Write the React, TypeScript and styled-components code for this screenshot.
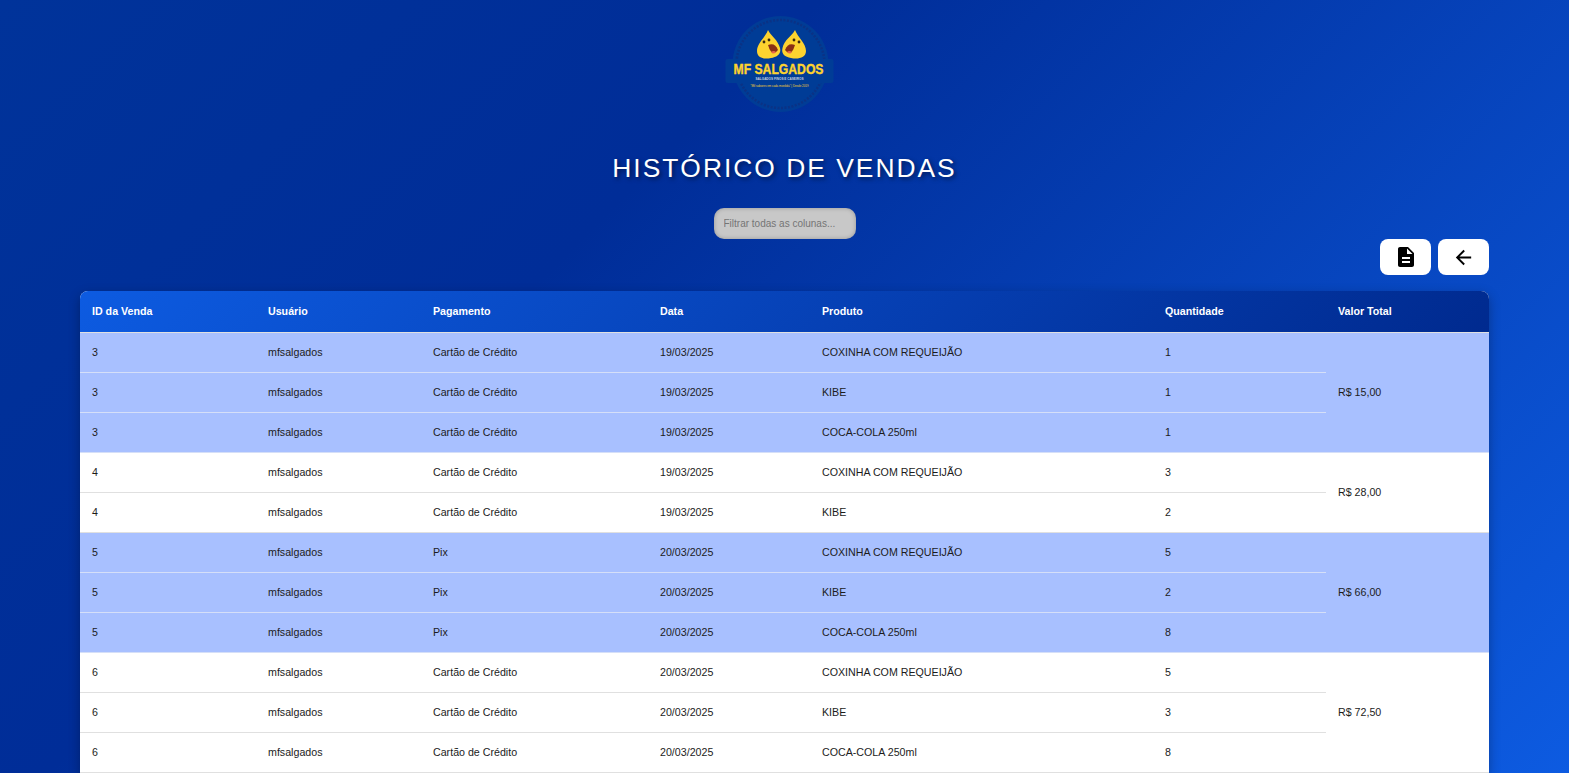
import React from "react";
import styled, { createGlobalStyle } from "styled-components";
import { MdArrowBack, MdDescription } from "react-icons/md";

const GlobalStyle = createGlobalStyle`
    html, body {
        margin: 0;
        padding: 0;
        height: 100%;
        overflow: hidden;
    }
    body {
        font-family: "Liberation Sans", Arial, sans-serif;
    }
`;

const Page = styled.main`
    box-sizing: border-box;
    height: 100vh;
    overflow: hidden;
    padding: 15px 80px 0 80px;
    background: linear-gradient(135deg, #00339a 0%, #002d98 35%, #0d5be1 100%);
    display: flex;
    flex-direction: column;
`;

const LogoWrap = styled.div`
    display: flex;
    justify-content: center;
    height: 98px;
`;

const Title = styled.h1`
    margin: 39px 0 0;
    font-size: 26.4px;
    line-height: 32px;
    font-weight: 400;
    letter-spacing: 2px;
    text-align: center;
    color: #fff;
    text-shadow: 2px 2px 4px rgba(0, 0, 0, 0.5);
`;

const FilterRow = styled.div`
    display: flex;
    justify-content: center;
    margin-top: 24px;
`;

const FilterInput = styled.input`
    box-sizing: border-box;
    width: 142px;
    height: 31px;
    padding: 0 10px;
    border: none;
    outline: none;
    border-radius: 10px;
    background: #c8c8c8;
    box-shadow: inset 0 0 4px rgba(0, 0, 0, 0.25);
    font-family: inherit;
    font-size: 10px;

    &::placeholder {
        color: #757575;
        opacity: 1;
    }
`;

const Actions = styled.div`
    display: flex;
    justify-content: flex-end;
    gap: 7px;
    height: 36px;
`;

const ActionButton = styled.button`
    width: 51px;
    height: 36px;
    padding: 0;
    border: none;
    border-radius: 8px;
    background: #fff;
    color: #000;
    display: flex;
    align-items: center;
    justify-content: center;
`;

const TableCard = styled.div`
    margin-top: 16px;
    border-radius: 8px 8px 0 0;
    overflow: hidden;
    background: #fff;
    box-shadow: 0 4px 12px rgba(0, 0, 0, 0.3);
    flex-shrink: 0;
`;

const SalesTable = styled.table`
    width: 100%;
    table-layout: fixed;
    border-collapse: collapse;
    font-size: 10.67px;
`;

const HeadRow = styled.tr`
    height: 41px;
    background: linear-gradient(135deg, #0d5be1 0%, #002a8f 100%);
    border-bottom: 1px solid #e0e0e0;
    box-shadow: 0 2px 4px rgba(0, 0, 0, 0.25);
`;

const HeadCell = styled.th`
    padding: 0 12px;
    text-align: left;
    font-weight: 700;
    color: #fff;
    background: transparent;
`;

const BodyRow = styled.tr<{ $tinted: boolean }>`
    height: 40px;
    background: ${(props) => (props.$tinted ? "#a8c0ff" : "#fff")};
`;

const BodyCell = styled.td<{ $tinted: boolean }>`
    box-sizing: border-box;
    padding: 0 12px;
    color: #1c1c1c;
    border-bottom: 1px solid ${(props) => (props.$tinted ? "#d5dff8" : "#e0e0e0")};
`;

const columns = [
    { label: "ID da Venda", width: 176 },
    { label: "Usuário", width: 165 },
    { label: "Pagamento", width: 227 },
    { label: "Data", width: 162 },
    { label: "Produto", width: 343 },
    { label: "Quantidade", width: 173 },
    { label: "Valor Total", width: 163 },
];

const COXINHA = "COXINHA COM REQUEIJÃO";
const KIBE = "KIBE";
const COCA = "COCA-COLA 250ml";

const sales = [
    { id: 3, payment: "Cartão de Crédito", date: "19/03/2025", total: "R$ 15,00", items: [[COXINHA, 1], [KIBE, 1], [COCA, 1]] },
    { id: 4, payment: "Cartão de Crédito", date: "19/03/2025", total: "R$ 28,00", items: [[COXINHA, 3], [KIBE, 2]] },
    { id: 5, payment: "Pix", date: "20/03/2025", total: "R$ 66,00", items: [[COXINHA, 5], [KIBE, 2], [COCA, 8]] },
    { id: 6, payment: "Cartão de Crédito", date: "20/03/2025", total: "R$ 72,50", items: [[COXINHA, 5], [KIBE, 3], [COCA, 8]] },
];

// the artwork sits a little left of centre in the original image
const Logo = () => (
    <svg width="120" height="98" viewBox="0 0 120 98">
        <circle cx="55.5" cy="49" r="48" fill="#003c96" />
        <circle cx="55.5" cy="49" r="44" fill="none" stroke="#0a3285" strokeWidth="2.5" strokeDasharray="2 1.5" />
        <rect x="0.5" y="44" width="108" height="24" rx="2" fill="#003c96" />
        <path d="M43 15 C46 21 53 25 55 33 C56.5 39 52 42 46 43 C39 44.5 32 43 32 36 C32 28 40 23 43 15 Z" fill="#fdd32f" />
        <path d="M70 15 C67 21 59 25 57.5 33 C56 39 60 42 66 43 C73 44.5 81 43 81 36 C81 28 73 23 70 15 Z" fill="#fdd32f" />
        <path d="M43 30 Q50 27 53 35 Q47 43 43 30 Z" fill="#8a2f14" />
        <path d="M70 30 Q63 27 60 35 Q66 43 70 30 Z" fill="#8a2f14" />
        <path d="M46 37 Q49 35 51 37 Q48 40 46 37 Z" fill="#e8674a" />
        <path d="M67 37 Q64 35 62 37 Q65 40 67 37 Z" fill="#e8674a" />
        <circle cx="39" cy="27" r="1.4" fill="#3a2a10" />
        <circle cx="44" cy="25" r="1.4" fill="#3a2a10" />
        <circle cx="74" cy="27" r="1.4" fill="#3a2a10" />
        <circle cx="69" cy="25" r="1.4" fill="#3a2a10" />
        <text x="8.5" y="59" fontFamily="Liberation Sans" fontWeight="700" fontSize="15" fill="#fdd32f" stroke="#fdd32f" strokeWidth="0.4" textLength="90" lengthAdjust="spacingAndGlyphs">MF SALGADOS</text>
        <text x="30.5" y="65" fontFamily="Liberation Sans" fontWeight="700" fontSize="4" fill="#c9d3e0" textLength="48" lengthAdjust="spacingAndGlyphs">SALGADOS FINOS E CASEIROS</text>
        <text x="25.5" y="72" fontFamily="Liberation Sans" fontSize="3.6" fill="#fdd32f" textLength="58" lengthAdjust="spacingAndGlyphs">"Mil sabores em cada mordida" | Desde 2019</text>
    </svg>
);

export default function App() {
    return (
        <Page>
            <GlobalStyle />
            <LogoWrap>
                <Logo />
            </LogoWrap>
            <Title>HISTÓRICO DE VENDAS</Title>
            <FilterRow>
                <FilterInput placeholder="Filtrar todas as colunas..." />
            </FilterRow>
            <Actions>
                <ActionButton aria-label="Exportar">
                    <MdDescription size={24} />
                </ActionButton>
                <ActionButton aria-label="Voltar">
                    <MdArrowBack size={23} />
                </ActionButton>
            </Actions>
            <TableCard>
                <SalesTable>
                    <colgroup>
                        {columns.map((col) => (
                            <col key={col.label} style={{ width: col.width }} />
                        ))}
                    </colgroup>
                    <thead>
                        <HeadRow>
                            {columns.map((col) => (
                                <HeadCell key={col.label}>{col.label}</HeadCell>
                            ))}
                        </HeadRow>
                    </thead>
                    <tbody>
                        {sales.map((sale, saleIndex) => {
                            const tinted = saleIndex % 2 === 0;
                            return sale.items.map(([product, quantity], itemIndex) => (
                                <BodyRow key={`${sale.id}-${itemIndex}`} $tinted={tinted}>
                                    <BodyCell $tinted={tinted}>{sale.id}</BodyCell>
                                    <BodyCell $tinted={tinted}>mfsalgados</BodyCell>
                                    <BodyCell $tinted={tinted}>{sale.payment}</BodyCell>
                                    <BodyCell $tinted={tinted}>{sale.date}</BodyCell>
                                    <BodyCell $tinted={tinted}>{product}</BodyCell>
                                    <BodyCell $tinted={tinted}>{quantity}</BodyCell>
                                    {itemIndex === 0 && (
                                        <BodyCell $tinted={tinted} rowSpan={sale.items.length}>
                                            {sale.total}
                                        </BodyCell>
                                    )}
                                </BodyRow>
                            ));
                        })}
                    </tbody>
                </SalesTable>
            </TableCard>
        </Page>
    );
}
